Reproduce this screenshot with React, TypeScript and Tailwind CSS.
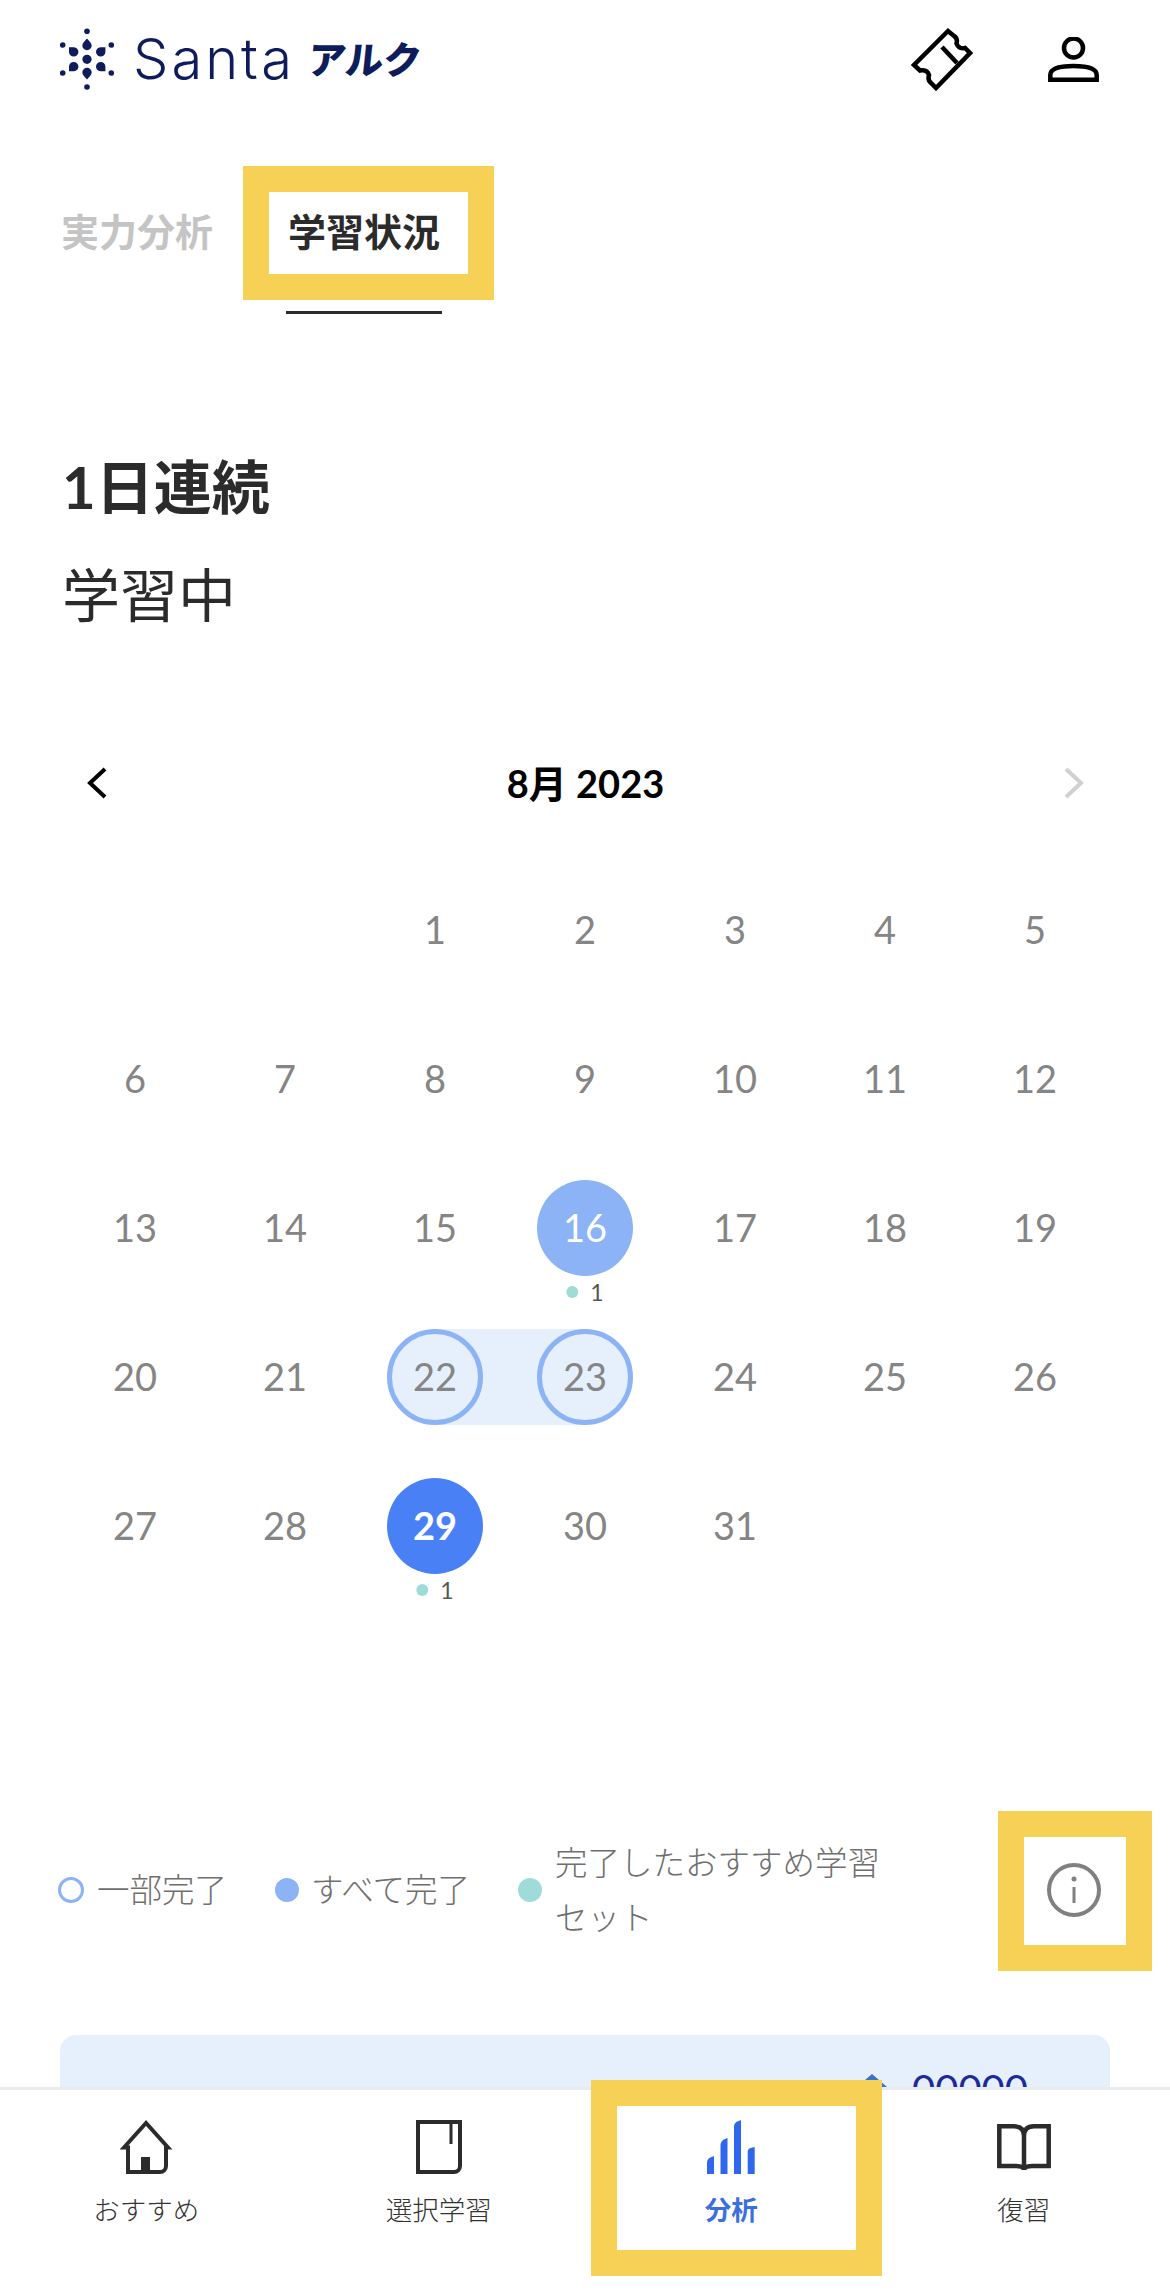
import React from 'react';

const stack = "font-['Lato','Noto_Sans_CJK_JP',sans-serif]";

const LogoMark = () => (
    <svg width="54" height="62" viewBox="10 8 54 62" fill="#0e1c5c">
        <circle cx="37" cy="11.3" r="2.8" />
        <circle cx="12.7" cy="25" r="2.8" />
        <circle cx="61.3" cy="25" r="2.8" />
        <circle cx="12.7" cy="53" r="2.8" />
        <circle cx="61.3" cy="53" r="2.8" />
        <circle cx="37" cy="67" r="2.8" />
        <path d="M37 18.5 C39 21 41.7 23 41.7 25.5 A4.7 4.7 0 0 1 32.3 25.5 C32.3 23 35 21 37 18.5 Z" />
        <path d="M37 59.5 C39 57 41.7 55 41.7 52.5 A4.7 4.7 0 0 0 32.3 52.5 C32.3 55 35 57 37 59.5 Z" />
        <circle cx="37" cy="39.3" r="4.6" />
        <path d="M19 27.2 H24 A4.7 4.7 0 1 1 19 32 Z" />
        <path d="M55.4 27.2 H50.4 A4.7 4.7 0 1 0 55.4 32 Z" />
        <path d="M19 51.3 H24 A4.7 4.7 0 1 0 19 46.5 Z" />
        <path d="M55.4 51.3 H50.4 A4.7 4.7 0 1 1 55.4 46.5 Z" />
    </svg>
);

const TicketIcon = () => (
    <svg width="62" height="63" viewBox="0 0 62 63" fill="none" stroke="#000" strokeWidth="4.5">
        <path d="M37 3 L3 37 L9 42.5 Q16 41 18 47 Q16.5 52 20 55 L25 60 L59 25 L54 20 Q48 21.5 45.5 15.5 Q47 10.5 43 8 Z" />
        <path d="M31 19 L46 35" />
    </svg>
);

const PersonIcon = () => (
    <svg width="51" height="45" viewBox="0 0 51 45" fill="none" stroke="#000" strokeWidth="4.5">
        <circle cx="25.5" cy="11" r="9.5" />
        <path d="M2.3 42.7 V38 Q2.3 29 25.5 29 Q48.7 29 48.7 38 V42.7 Z" />
    </svg>
);

const HomeIcon = () => (
    <svg width="52" height="54" viewBox="0 0 52 54" fill="none" stroke="#2b2b2b" strokeWidth="4">
        <path d="M26 3 L4 27.5 H8 V52 H40 A6 6 0 0 0 46 46 V27.5 H48 Z" />
        <rect x="21" y="37" width="9" height="15" fill="#2b2b2b" stroke="none" />
    </svg>
);

const BookIcon = () => (
    <svg width="46" height="54" viewBox="0 0 46 54" fill="none" stroke="#2b2b2b" strokeWidth="4">
        <path d="M2 2 H44 V46 A6 6 0 0 1 38 52 H2 Z" />
        <path d="M35 2 V24" strokeWidth="3" />
    </svg>
);

const BarsIcon = () => (
    <svg width="48" height="54" viewBox="0 0 48 54" fill="#2f66ee">
        <path d="M0 54 V42 Q0 38 7 36 V54 Z" />
        <path d="M13.5 54 V25 Q13.5 20 20.5 18 V54 Z" />
        <path d="M27 54 V6 Q27 2 34 0 V54 Z" />
        <path d="M40.7 54 V31 Q40.7 28 47.7 27 V54 Z" />
    </svg>
);

const OpenBookIcon = () => (
    <svg width="54" height="48" viewBox="0 0 54 48" fill="none" stroke="#2b2b2b" strokeWidth="4.5">
        <path d="M2.3 2.3 H17 Q27 2.3 27 12 Q27 2.3 37 2.3 H51.7 V42 H35 Q27 42 27 46 Q27 42 19 42 H2.3 Z" />
        <path d="M27 12 V46" />
    </svg>
);

const Chevron = ({ dir, color }: { dir: 'left' | 'right'; color: string }) => (
    <svg width="20" height="32" viewBox="0 0 20 32" fill="none" stroke={color} strokeWidth="4">
        <path d={dir === 'left' ? 'M18 2 L3 16 L18 30' : 'M2 2 L17 16 L2 30'} />
    </svg>
);

const InfoIcon = () => (
    <svg width="54" height="54" viewBox="0 0 54 54" fill="none" stroke="#808080" strokeWidth="4">
        <circle cx="27" cy="27" r="25" />
        <path d="M27 24 V40" strokeWidth="3" />
        <circle cx="27" cy="16" r="2.5" fill="#808080" stroke="none" />
    </svg>
);

// the yellow annotation frames lie over the page
const Frame = ({ className }: { className: string }) => (
    <div className={`absolute border-[#f6d155] ${className}`} />
);

const Done = () => (
    <div className="absolute top-[127px] left-1/2 -translate-x-1/2 flex items-center gap-[12px] h-[24px] text-[23px] text-[#555]">
        <span className="w-[12px] h-[12px] rounded-full bg-[#9fdcd9]" />
        <span>1</span>
    </div>
);

const Day = ({ n }: { n: number }) => {
    let circle = 'text-[#858585]';
    if (n === 16) circle = 'bg-[#8bb3f6] text-white';
    if (n === 22 || n === 23) circle = 'bg-[#e6effc] border-[5px] border-[#8bb3f6] text-[#858585]';
    if (n === 29) circle = 'bg-[#4a80f5] text-white font-bold';
    return (
        <div className="relative h-[149px] flex items-center justify-center">
            {n === 22 && <div className="absolute left-1/2 right-0 h-[96px] bg-[#e6effc]" />}
            {n === 23 && <div className="absolute left-0 right-1/2 h-[96px] bg-[#e6effc]" />}
            <div className={`relative w-[96px] h-[96px] rounded-full flex items-center justify-center text-[38px] ${circle}`}>{n}</div>
            {(n === 16 || n === 29) && <Done />}
        </div>
    );
};

const days: number[] = Array.from({ length: 31 }, (_, i) => i + 1);

const App: React.FC = () => {
    return (
        <div className={`relative w-[1170px] h-[2294px] overflow-hidden bg-white text-[#2b2b2b] ${stack}`}>
            <header className="flex items-center justify-between h-[118px] pl-[60px] pr-[71px]">
                <div className="flex items-center">
                    <LogoMark />
                    <span className="ml-[19px] font-['Inter'] text-[56px] font-light leading-none tracking-[3px] text-[#0e1c5c]">Santa</span>
                    <span className="ml-[13px] text-[38px] font-black leading-none -skew-x-6 text-[#0e1c5c]">アルク</span>
                </div>
                <div className="flex items-center gap-[75px]">
                    <TicketIcon />
                    <PersonIcon />
                </div>
            </header>

            <nav className="flex items-start pl-[61px] gap-[73px] mt-[83px] text-[38px] font-bold leading-[60px]">
                <span className="text-[#c4c4c4]">実力分析</span>
                <span className="px-[2px] pb-[50px] border-b-[3px] border-[#2b2b2b]">学習状況</span>
            </nav>

            <section className="pl-[62px] mt-[135px] text-[58px] leading-[76px]">
                <h1 className="font-bold">1日連続</h1>
                <p className="mt-[32px]">学習中</p>
            </section>

            <div className="flex items-center justify-between h-[40px] mt-[130px] pl-[87px] pr-[86px]">
                <Chevron dir="left" color="#000" />
                <span className="text-[38px] font-bold text-black">8月 2023</span>
                <Chevron dir="right" color="#d0d0d0" />
            </div>

            <div className="grid grid-cols-7 mx-[60px] mt-[52px]">
                <div className="col-span-2" />
                {days.map((n) => (
                    <Day key={n} n={n} />
                ))}
                <div className="col-span-2" />
            </div>

            <div className="flex items-center mt-[235px] pl-[58px] pr-[69px] text-[32.5px] font-light text-[#6f6f6f]">
                <span className="w-[26px] h-[26px] rounded-full border-[3px] border-[#8bb3f6]" />
                <span className="ml-[13px]">一部完了</span>
                <span className="ml-[48px] w-[24px] h-[24px] rounded-full bg-[#8bb3f6]" />
                <span className="ml-[12px]">すべて完了</span>
                <span className="ml-[48px] w-[24px] h-[24px] rounded-full bg-[#9fdcd9]" />
                <span className="ml-[13px] w-[330px] leading-[55px]">完了したおすすめ学習セット</span>
                <div className="ml-auto">
                    <InfoIcon />
                </div>
            </div>

            <div className="flex justify-end items-start h-[120px] mt-[90px] mx-[60px] pt-[30px] pr-[82px] rounded-t-2xl bg-[#e6effc]">
                <svg width="30" height="26" viewBox="0 0 30 26" fill="#3b6fd0" className="mt-[9px] mr-[25px]">
                    <path d="M15 0 L30 13 H0 Z" />
                </svg>
                <span className="text-[40px] leading-[48px] text-[#1c2a9a]">00000</span>
            </div>

            <div className="absolute left-0 bottom-0 w-full h-[207px] grid grid-cols-4 border-t-[3px] border-[#e8ecef] bg-white text-[26.5px] text-[#333]">
                <div className="flex flex-col items-center pt-[30px]">
                    <HomeIcon />
                    <span className="mt-[18px] leading-[36px] font-light">おすすめ</span>
                </div>
                <div className="flex flex-col items-center pt-[30px]">
                    <BookIcon />
                    <span className="mt-[18px] leading-[36px] font-light">選択学習</span>
                </div>
                <div className="flex flex-col items-center pt-[30px]">
                    <BarsIcon />
                    <span className="mt-[18px] leading-[36px] font-bold text-[#3b6fe0]">分析</span>
                </div>
                <div className="flex flex-col items-center pt-[34px]">
                    <OpenBookIcon />
                    <span className="mt-[20px] leading-[36px] font-light">復習</span>
                </div>
            </div>

            <Frame className="left-[243px] top-[166px] w-[251px] h-[134px] border-[26px]" />
            <Frame className="left-[998px] top-[1811px] w-[154px] h-[160px] border-[26px]" />
            <Frame className="left-[591px] top-[2080px] w-[291px] h-[196px] border-[26px]" />
        </div>
    );
};

export default App;
